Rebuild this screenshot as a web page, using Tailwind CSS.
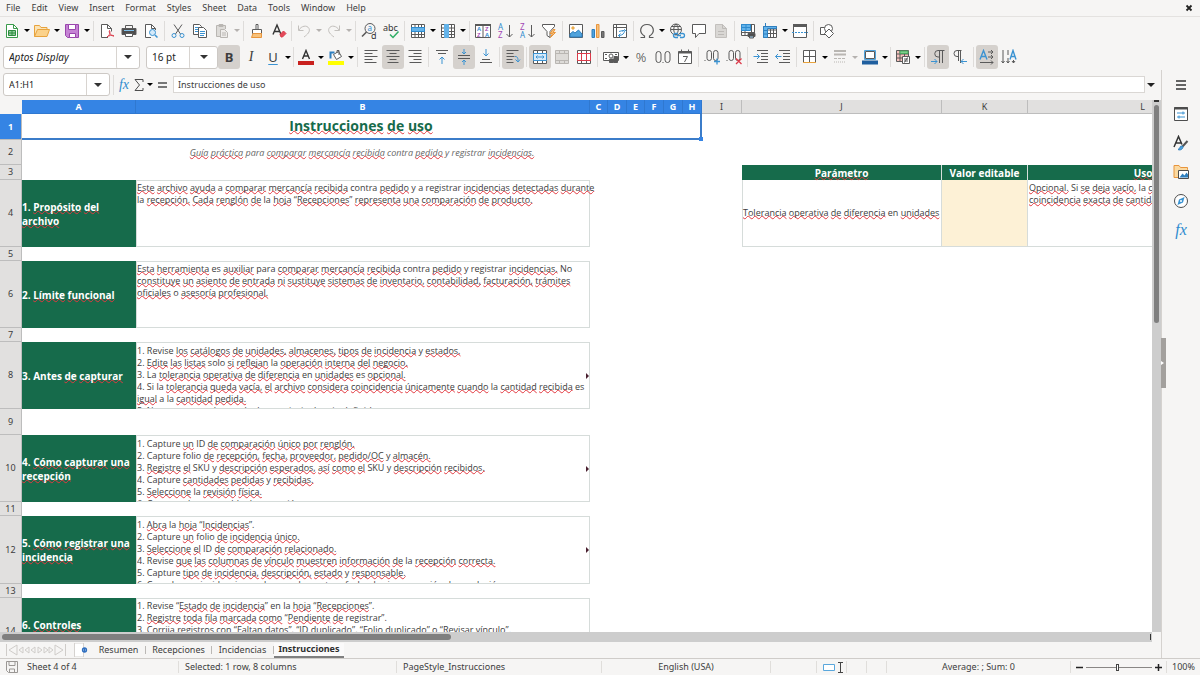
<!DOCTYPE html>
<html lang="es">
<head>
    <meta charset="UTF-8">
    <meta name="viewport" content="width=device-width, initial-scale=1.0">
    <title>Instrucciones - Calc</title>
    <script src="https://cdn.jsdelivr.net/npm/@tailwindcss/browser@4"></script>
</head>
<body class="flex h-screen flex-col overflow-hidden bg-[#f6f5f4] font-['Noto_Sans',sans-serif] text-[9px] leading-[12px] text-[#3d3d3d] [&_i]:inline-block [&_i]:border-x-[3px] [&_i]:border-t-[3px] [&_i]:border-x-transparent [&_i]:border-t-current">

    <!-- Menú principal -->
    <nav class="flex h-[17px] shrink-0 items-center border-b border-[#e4e2e0] pl-[6px] pr-[7px]">
        <div class="flex gap-[11px]">
            <button>File</button>
            <button>Edit</button>
            <button>View</button>
            <button>Insert</button>
            <button>Format</button>
            <button>Styles</button>
            <button>Sheet</button>
            <button>Data</button>
            <button>Tools</button>
            <button>Window</button>
            <button>Help</button>
        </div>
        <button class="ml-auto" aria-label="Close">
            <svg class="size-2" viewBox="0 0 8 8" fill="none" stroke="#222" stroke-width="1.8"><path d="M1.5 1.5l5 5M6.5 1.5l-5 5"/></svg>
        </button>
    </nav>

    <!-- Barra estándar -->
    <div class="flex h-[27px] shrink-0 items-center pl-px [&_button]:flex [&_button]:h-[24px] [&_button]:shrink-0 [&_button]:items-center [&_button]:justify-center [&_hr]:h-5 [&_hr]:shrink-0 [&_hr]:border-0 [&_hr]:bg-[linear-gradient(#dedcda,#dedcda)] [&_hr]:bg-[length:1px_100%] [&_hr]:bg-center [&_hr]:bg-no-repeat [&_svg]:size-4 [&_svg]:overflow-visible [&_svg]:fill-none [&_svg]:stroke-[#5a5a5a]">
        <button class="w-[22px]" aria-label="New"><svg viewBox="0 0 16 16"><path d="M2.5 1.5h7l4 4v9h-11z" fill="#fff" stroke="#3a9b4b"/><path d="M9.5 1.5v4h4" stroke="#3a9b4b"/><path d="M4.500 7.500h7v5h-7zM4.500 10h7M8 7.500v5" fill="#8fd09b" stroke="#2f8a40"/></svg></button>
        <button class="w-2 text-black" aria-label="New options"><i></i></button>
        <button class="w-[22px]" aria-label="Open"><svg viewBox="0 0 16 16"><path d="M.5 13.500v-11h5l1.500 2h6v3" fill="#fbe3b4" stroke="#e8a33d"/><path d="M.5 13.500l3-7h12l-2.500 7z" fill="#fbd28b" stroke="#e8a33d"/></svg></button>
        <button class="w-2 text-black" aria-label="Open options"><i></i></button>
        <button class="w-[22px]" aria-label="Save"><svg viewBox="0 0 16 16"><path d="M1.500 1.500h13v13h-11l-2-2z" fill="#c583d4" stroke="#9a46ad"/><path d="M4.500 1.500h7v5h-7zM5.500 10.500h6v4h-6z" fill="#fff" stroke="#9a46ad"/></svg></button>
        <button class="w-2 text-black" aria-label="Save options"><i></i></button>
        <hr class="w-[5px]">
        <button class="w-[22px]" aria-label="Export as PDF"><svg viewBox="0 0 16 16"><path d="M9 14.500H2.500v-13h6l4 4v3" fill="#fff"/><path d="M8.500 1.500v4h4"/><path d="M8 14c3-2 3.500-5 2.500-6.500-1 1.500 1 5.500 4.500 5.500-2-1.500-5-.5-7 1z" stroke="#dc3b4a"/></svg></button>
        <button class="w-[22px]" aria-label="Print"><svg viewBox="0 0 16 16"><path d="M4.500 5V2.500h7V5"/><path d="M1 5.500h14v6H1z" fill="#4d4d4d"/><path d="M3 7.500h10" stroke="#7fc0ea"/><path d="M4.500 10.500h7v3h-7z" fill="#fff"/></svg></button>
        <button class="w-[22px]" aria-label="Print preview"><svg viewBox="0 0 16 16"><path d="M8 14.500H2.500v-13h6l4 4V7" fill="#fff"/><path d="M8.500 1.500v4h4"/><circle cx="9.500" cy="9.500" r="3" fill="#d5eafa" stroke="#3b93d2"/><path d="M12 12l2.500 2.500" stroke="#3b93d2" stroke-width="1.500"/></svg></button>
        <hr class="w-[5px]">
        <button class="w-[22px]" aria-label="Cut"><svg viewBox="0 0 16 16"><path d="M4 1.500l6.500 9.500M12 1.500L5.500 11"/><circle cx="4" cy="12.500" r="2" stroke="#3b93d2"/><circle cx="12" cy="12.500" r="2" stroke="#3b93d2"/></svg></button>
        <button class="w-[22px]" aria-label="Copy"><svg viewBox="0 0 16 16"><path d="M1.500 1.500h6l2 2v8h-8z" fill="#fff"/><path d="M3 4.500h4M3 6.500h3M3 8.500h3" stroke="#3b93d2"/><path d="M6.500 4.500h5l3 3v7h-8z" fill="#fff"/><path d="M8 8.500h5M8 10.500h5M8 12.500h4" stroke="#3b93d2"/></svg></button>
        <button class="w-[22px]" aria-label="Paste"><svg viewBox="0 0 16 16"><path d="M6 13.500H2.500v-11h9V6" fill="#dddbd8" stroke="#b9b6b2"/><path d="M5 1.500h4v2H5z" fill="#b9b6b2" stroke="#b9b6b2"/><path d="M6.500 6.500h4l3 3v5h-7zM8 10h4M8 12h4" fill="#eeecea" stroke="#b9b6b2"/></svg></button>
        <button class="w-2 text-[#b5b2af]" aria-label="Paste options"><i></i></button>
        <hr class="w-[5px]">
        <button class="w-[22px]" aria-label="Clone formatting"><svg viewBox="0 0 16 16"><path d="M7 1.500h2v5H7zM3.500 6.500h9v4h-9z" fill="#fff"/><path d="M4 10.500h8.500v4h-10z" fill="#f7c27c" stroke="#e8953d"/></svg></button>
        <button class="w-[22px]" aria-label="Clear formatting"><svg viewBox="0 0 16 16"><path d="M2 11.500L6 2l4 9.500M3.500 8.500h5" stroke="#333" stroke-width="1.400"/><path d="M9 11.500l3.500-3.500 2.500 2.500-3.500 3.500H10z" fill="#e4495a" stroke="#dc3b4a"/></svg></button>
        <hr class="w-[3px]">
        <button class="w-[22px]" aria-label="Undo"><svg viewBox="0 0 16 16"><path d="M2.500 2.500v5h5M3 7c2-4 8-5.500 10-1.500 1.500 3-1.500 6-5 8.500" stroke="#c3c0bd"/></svg></button>
        <button class="w-2 text-[#b5b2af]" aria-label="Undo list"><i></i></button>
        <button class="w-[22px]" aria-label="Redo"><svg viewBox="0 0 16 16"><path d="M13.500 2.500v5h-5M13 7C11 3 5 1.500 3 5.500 1.500 8.500 4.500 11.500 8 14" stroke="#c3c0bd"/></svg></button>
        <button class="w-2 text-[#b5b2af]" aria-label="Redo list"><i></i></button>
        <hr class="w-[5px]">
        <button class="w-[22px]" aria-label="Find and replace"><svg viewBox="0 0 16 16"><circle cx="9" cy="5.500" r="5"/><path d="M5.500 9L1 13.500" stroke-width="1.600"/><text x="6.500" y="8" font-size="8" fill="#2e8bcf" stroke="none">a</text><text x="10" y="15.500" font-size="9" fill="#333" stroke="none">d</text></svg></button>
        <button class="w-[22px]" aria-label="Spelling"><svg viewBox="0 0 16 16"><text x="0" y="8" font-size="9" fill="#333" stroke="none">abc</text><path d="M7 11.500l3 3 5.500-6" stroke="#2fae66" stroke-width="1.500"/></svg></button>
        <hr class="w-[5px]">
        <button class="w-[22px]" aria-label="Row"><svg viewBox="0 0 16 16"><path d="M1.500 1.500h13v13h-13zM1.500 11.500h13M5 1.500v13M8.500 1.500v13M11.500 1.500v13" fill="#fff"/><path d="M1.500 4.500h13v4h-13z" fill="#63b3ea" stroke="#2e8bcf"/></svg></button>
        <button class="w-2 text-black" aria-label="Row options"><i></i></button>
        <button class="w-[22px]" aria-label="Column"><svg viewBox="0 0 16 16"><path d="M1.500 1.500h13v13h-13zM11.500 1.500v13M1.500 5h13M1.500 8.500h13M1.500 11.500h13" fill="#fff"/><path d="M4.500 1.500v13h4v-13z" fill="#63b3ea" stroke="#63b3ea"/></svg></button>
        <button class="w-2 text-black" aria-label="Column options"><i></i></button>
        <hr class="w-[5px]">
        <button class="w-[22px]" aria-label="Sort"><svg viewBox="0 0 16 16"><path d="M.500 1.500h15v13H.500zM8 2v12" fill="#fff"/><path d="M0 2h16" stroke-width="2"/><g stroke="none" font-size="6" font-weight="600"><text x="2" y="8" fill="#2e8bcf">A</text><text x="2" y="14" fill="#a347b5">Z</text><text x="10" y="8" fill="#a347b5">Z</text><text x="10" y="14" fill="#2e8bcf">A</text></g></svg></button>
        <button class="w-[22px]" aria-label="Sort ascending"><svg viewBox="0 0 16 16"><path d="M12.500 2v12M9.500 11l3 3 3-3"/><g stroke="none" font-size="8"><text x="1" y="7" fill="#2e8bcf">A</text><text x="1" y="15" fill="#a347b5">Z</text></g></svg></button>
        <button class="w-[22px]" aria-label="Sort descending"><svg viewBox="0 0 16 16"><path d="M12.500 2v12M9.500 11l3 3 3-3"/><g stroke="none" font-size="8"><text x="1" y="7" fill="#a347b5">Z</text><text x="1" y="15" fill="#2e8bcf">A</text></g></svg></button>
        <button class="w-[22px]" aria-label="AutoFilter"><svg viewBox="0 0 16 16"><path d="M1.500 1.500h12v2L9 8.500v6l-3-2v-4l-4.500-5z" fill="#fff"/><path d="M12 6.500l-3 4h2.500l-2 4 5-5H12l2-3z" fill="#f7c27c" stroke="#e8953d"/></svg></button>
        <hr class="w-[5px]">
        <button class="w-[22px]" aria-label="Insert image"><svg viewBox="0 0 16 16"><path d="M1.500 1.500h13v13h-13z" fill="#fff"/><circle cx="5" cy="5" r="1.200" fill="#f3c36c" stroke="#e8a33d"/><path d="M2 14l0-3 3-2.500 2 1.500 3.500-3 3.500 4v3z" fill="#4fa3dd" stroke="#2e7fbf"/></svg></button>
        <button class="w-[22px]" aria-label="Insert chart"><svg viewBox="0 0 16 16"><path d="M2 6.500h2.500v8H2z" fill="#4fa3dd" stroke="#2e7fbf"/><path d="M6.500 1.500H9v13H6.500z" fill="#f7c27c" stroke="#e8953d"/><path d="M11.500 8.500H14v6h-2.500z" fill="#777"/></svg></button>
        <button class="w-[22px]" aria-label="Pivot table"><svg viewBox="0 0 16 16"><path d="M1.500 1.500h13v13h-13zM1.500 4.500h13M4.500 1.500v13" fill="#fff"/><path d="M6.500 12.500c4 0 6-2 6-5M10.500 8.500l2-2 2 2M8.500 10.500l-2 2 2 2M7 8.500l4-1" stroke="#3b93d2"/></svg></button>
        <hr class="w-[5px]">
        <button class="w-[22px]" aria-label="Special character"><svg viewBox="0 0 16 16"><path d="M1.500 14.500h4v-1.500C-1 9 1.500 1.500 8 1.500S17 9 10.500 13v1.500h4" stroke-width="1.200"/></svg></button>
        <button class="w-2 text-black" aria-label="Special character list"><i></i></button>
        <button class="w-[22px]" aria-label="Hyperlink"><svg viewBox="0 0 16 16"><circle cx="7" cy="6.500" r="5.500"/><path d="M1.500 6.500h11M7 1c-3 3-3 8 0 11M7 1c3 3 3 8 0 11M2.500 3.500h9"/><path d="M9 10.500H6.500a2 2 0 000 4H9M11 10.500h2.500a2 2 0 010 4H11M8 12.500h4" fill="none" stroke="#3b93d2" stroke-width="1.300"/></svg></button>
        <button class="w-[22px]" aria-label="Comment"><svg viewBox="0 0 16 16"><path d="M1.500 1.500h13v9H8l-3.500 4v-4h-3z" fill="#fff"/></svg></button>
        <button class="w-[22px]" aria-label="Headers and footers"><svg viewBox="0 0 16 16"><path d="M2.500 1.500h7l4 4v9h-11z" fill="#d9d7d4" stroke="#c3c0bd"/><path d="M9.500 1.500v4h4M5 8.500h6M5 11.500h6" stroke="#bdbab7"/></svg></button>
        <hr class="w-[5px]">
        <button class="w-[22px]" aria-label="Print area"><svg viewBox="0 0 16 16"><path d="M1.500 1.500h13v11h-13zM1.500 9.500h13M11.500 1.500v11M5 8v5" fill="#fff"/><path d="M1.500 1.500h9v6h-9zM1.500 4.500h9M6 1.500v6" fill="#63b3ea" stroke="#2e8bcf"/><path d="M8 10.500h7v3H8z" fill="#4d4d4d"/><path d="M9.500 13h4v2h-4z" fill="#9fd0f2"/></svg></button>
        <button class="w-[22px]" aria-label="Freeze rows and columns"><svg viewBox="0 0 16 16"><path d="M1.500 3.500h13v11h-13zM5.500 7h9M5.500 10.500h9M8.500 4v10M11.500 4v10" fill="#fff"/><path d="M1.500 3.500h13v2h-9v9h-4z" fill="#63b3ea" stroke="#2e7fbf"/><path d="M3.500 0v3M1 7.500h4M1 11h4" stroke="#2e7fbf"/></svg></button>
        <button class="w-2 text-black" aria-label="Freeze options"><i></i></button>
        <button class="w-[22px]" aria-label="Split window"><svg viewBox="0 0 16 16"><path d="M1.500 1.500h13v13h-13z" fill="#fff"/><path d="M1 2.500h14" stroke-width="3"/><path d="M0 9.500h16" stroke="#3b93d2" stroke-dasharray="2 1"/></svg></button>
        <hr class="w-[5px]">
        <button class="w-[22px]" aria-label="Show draw functions"><svg viewBox="0 0 16 16"><path d="M6 11.500H1.500v-7H6" fill="#fff"/><circle cx="9.500" cy="5.500" r="4" fill="#fff"/><path d="M10 6l4.500 4.500L10 15l-4.500-4.500z" fill="#fff"/></svg></button>
    </div>

    <!-- Barra de formato -->
    <div class="flex h-[26px] shrink-0 items-center pl-[3px] [&_button]:flex [&_button]:h-[24px] [&_button]:shrink-0 [&_button]:items-center [&_button]:justify-center [&_button]:rounded-[3px] [&_hr]:h-5 [&_hr]:shrink-0 [&_hr]:border-0 [&_hr]:bg-[linear-gradient(#dedcda,#dedcda)] [&_hr]:bg-[length:1px_100%] [&_hr]:bg-center [&_hr]:bg-no-repeat [&_svg]:size-4 [&_svg]:fill-none [&_svg]:stroke-[#5a5a5a]">
        <div class="flex h-[23px] w-[137px] shrink-0 items-center overflow-hidden rounded-[3px] border border-[#cdc9c5] bg-white">
            <input class="h-full min-w-0 flex-1 pl-[5px] text-[10px] italic text-[#222] outline-none" aria-label="Font name" value="Aptos Display">
            <button class="w-[23px] border-l border-[#d8d4d0] text-[#333]" aria-label="Font list"><span class="border-x-4 border-t-4 border-x-transparent"></span></button>
        </div>
        <div class="ml-[6px] flex h-[23px] w-[72px] shrink-0 items-center overflow-hidden rounded-[3px] border border-[#cdc9c5] bg-white">
            <input class="h-full min-w-0 flex-1 pl-[5px] text-[10px] text-[#222] outline-none" aria-label="Font size" value="16 pt">
            <button class="w-[28px] border-l border-[#d8d4d0] text-[#333]" aria-label="Size list"><span class="border-x-4 border-t-4 border-x-transparent"></span></button>
        </div>
        <button class="w-[22px] bg-[#d5d1cd] text-[13px] font-bold" aria-label="Bold">B</button>
        <button class="w-[22px] font-['Liberation_Serif',serif] text-[14px] italic" aria-label="Italic">I</button>
        <button class="w-[22px] text-[13px] underline decoration-[#3b93d2] underline-offset-2" aria-label="Underline">U</button>
        <button class="w-2 text-black" aria-label="Underline options"><i></i></button>
        <hr class="w-[3px]">
        <button class="w-[22px]" aria-label="Font color"><svg viewBox="0 0 16 16"><path d="M4.500 10L8 1.500l3.500 8.500M5.500 7h5" stroke="#333" stroke-width="1.400"/><path d="M0 14h16" stroke="#c9211e" stroke-width="4"/></svg></button>
        <button class="w-2 text-black" aria-label="Font color options"><i></i></button>
        <button class="w-[22px]" aria-label="Background color"><svg viewBox="0 0 16 16"><path d="M5.500 5.500l5-3 3 5-5 3zM9 4V1.500h2V6" fill="#fff"/><path d="M2.500 9.500v-6h4" stroke="#2e7fbf" stroke-width="2"/><path d="M0 14h16" stroke="#ffff00" stroke-width="4"/></svg></button>
        <button class="w-2 text-black" aria-label="Background color options"><i></i></button>
        <hr class="w-[5px]">
        <button class="w-[22px]" aria-label="Align left"><svg viewBox="0 0 16 16"><path d="M1.500 1.500h13M1.500 4.500h8M1.500 7.500h13M1.500 10.500h8M1.500 13.500h12"/></svg></button>
        <button class="w-[22px] bg-[#d5d1cd]" aria-label="Center"><svg viewBox="0 0 16 16"><path d="M1.500 1.500h13M4.500 4.500h7M1.500 7.500h13M4.500 10.500h7M2.500 13.500h11"/></svg></button>
        <button class="w-[22px]" aria-label="Align right"><svg viewBox="0 0 16 16"><path d="M1.500 1.500h13M6.500 4.500h8M1.500 7.500h13M6.500 10.500h8M2.500 13.500h12"/></svg></button>
        <hr class="w-[5px]">
        <button class="w-[22px]" aria-label="Align top"><svg viewBox="0 0 16 16"><path d="M2 1.500h12M4 4.500h8"/><path d="M8 15V8M5.500 10.500L8 8l2.500 2.500" stroke="#3b93d2"/></svg></button>
        <button class="w-[22px] bg-[#d5d1cd]" aria-label="Center vertically"><svg viewBox="0 0 16 16"><path d="M2 6.500h12M2 9.500h12"/><path d="M8 0v5M6 3l2 2 2-2M8 16v-5M6 13l2-2 2 2" stroke="#3b93d2"/></svg></button>
        <button class="w-[22px]" aria-label="Align bottom"><svg viewBox="0 0 16 16"><path d="M4 10.500h8M2 13.500h12"/><path d="M8 0v7M5.500 4.500L8 7l2.500-2.500" stroke="#3b93d2"/></svg></button>
        <hr class="w-[5px]">
        <button class="w-[22px] bg-[#d5d1cd]" aria-label="Wrap text"><svg viewBox="0 0 16 16"><path d="M1.500 1.500h12M1.500 4.500h7M1.500 7.500h8M1.500 10.500h6M1.500 13.500h7"/><path d="M10 7.500c3 0 3 2 3 5M10.500 10.500l2.500 2.500 2-2.500" stroke="#3b93d2"/></svg></button>
        <hr class="w-[5px]">
        <button class="w-[22px] bg-[#d5d1cd]" aria-label="Merge and center"><svg viewBox="0 0 16 16"><path d="M1.500 1.500h13v13h-13zM5.500 1.500v3M10.500 1.500v3M5.500 11.500v3M10.500 11.500v3" fill="#fff"/><path d="M1.500 4.500h13v7h-13zM4 8h8M5.500 6.500L4 8l1.500 1.500M10.500 6.500L12 8l-1.500 1.500" fill="#d5eafa" stroke="#3b93d2"/></svg></button>
        <button class="w-[22px]" aria-label="Merge cells"><svg viewBox="0 0 16 16"><path d="M1.500 1.500h13v13h-13zM1.500 4.500h13M1.500 11.500h13M5.500 1.500v3M10.500 1.500v3M5.500 11.500v3M10.500 11.500v3" fill="#dddbd8" stroke="#b9b6b2"/></svg></button>
        <button class="w-[22px]" aria-label="Unmerge cells"><svg viewBox="0 0 16 16"><path d="M1.500 1.500h13v13h-13zM5.500 1.500v13M10.500 1.500v13" fill="#fff"/><path d="M1 4.500h14M1 11.500h14M1.500 4.500v7M5.500 4.500v7M10.500 4.500v7M14.500 4.500v7" stroke="#dc3b4a"/></svg></button>
        <hr class="w-[5px]">
        <button class="w-[22px]" aria-label="Currency"><svg viewBox="0 0 16 16"><path d="M.5 3.500h15v8H.5z" fill="#fff"/><circle cx="8" cy="7" r="2"/><path d="M2 5.500h2M12 5.500h2M2 9.500h2"/><path d="M6.500 10h4v3.500h-4zM11 7.500h3.500v6H11z" fill="#5a5a5a"/></svg></button>
        <button class="w-2 text-black" aria-label="Currency options"><i></i></button>
        <button class="w-[22px] text-[13px] font-light" aria-label="Percent">%</button>
        <button class="w-[22px]" aria-label="Number"><svg viewBox="0 0 16 16"><rect x="1" y="2.500" width="5" height="11" rx="2.500"/><rect x="10" y="2.500" width="5" height="11" rx="2.500"/><path d="M7.500 13.500h1"/></svg></button>
        <button class="w-[22px]" aria-label="Date"><svg viewBox="0 0 16 16"><path d="M1.500 2.500h13v12h-13z" fill="#fff"/><path d="M1.500 3.500h13" stroke-width="2"/><path d="M4.500 .500v3M11.500 .500v3M6 7.500h4.500L7.500 13" /></svg></button>
        <hr class="w-[5px]">
        <button class="w-[22px]" aria-label="Add decimal place"><svg viewBox="0 0 16 16"><path d="M.500 11.500h1"/><rect x="3" y="1.500" width="4.500" height="10" rx="2.200"/><rect x="9.500" y="1.500" width="4.500" height="10" rx="2.200"/><path d="M13 9.500v6M10 12.500h6" stroke="#3b93d2" stroke-width="1.300"/></svg></button>
        <button class="w-[22px]" aria-label="Delete decimal place"><svg viewBox="0 0 16 16"><path d="M.500 11.500h1"/><rect x="3" y="1.500" width="4.500" height="10" rx="2.200"/><rect x="9.500" y="1.500" width="4.500" height="10" rx="2.200"/><path d="M10 9.500l5.500 5.500M15.500 9.500L10 15" stroke="#dc3b4a" stroke-width="1.300"/></svg></button>
        <hr class="w-[5px]">
        <button class="w-[22px]" aria-label="Increase indent"><svg viewBox="0 0 16 16"><path d="M4 1.500h11M8 4.500h7M8 7.500h7M8 10.500h7M4 13.500h11"/><path d="M.500 7.500h6M4 5l2.500 2.500L4 10" stroke="#3b93d2"/></svg></button>
        <button class="w-[22px]" aria-label="Decrease indent"><svg viewBox="0 0 16 16"><path d="M4 1.500h11M8 4.500h7M8 7.500h7M8 10.500h7M4 13.500h11"/><path d="M.500 7.500h6M3 5L.500 7.500 3 10" stroke="#3b93d2"/></svg></button>
        <hr class="w-[5px]">
        <button class="w-[22px]" aria-label="Borders"><svg viewBox="0 0 16 16"><path d="M1.500 1.500h12v12h-12zM7.500 1.500v12M1.500 7.500h12" fill="#fff"/><path d="M1 13.500h13" stroke="#e8a33d"/></svg></button>
        <button class="w-2 text-black" aria-label="Border options"><i></i></button>
        <button class="w-[22px]" aria-label="Border style"><svg viewBox="0 0 16 16"><path d="M2 2h12M2 5.500h12" stroke="#b9b6b2" stroke-width="2"/><path d="M2 9.500h12" stroke="#b9b6b2" stroke-dasharray="3 1"/><path d="M2 13h12" stroke="#b9b6b2" stroke-dasharray="1 1"/></svg></button>
        <button class="w-2 text-[#b5b2af]" aria-label="Border style options"><i></i></button>
        <button class="w-[22px]" aria-label="Border color"><svg viewBox="0 0 16 16"><path d="M2.500 1.500h11v9h-11z" fill="#fff" stroke="#4fa3dd"/><path d="M3.500 2.500h9v7h-9z"/><path d="M0 13.500h16" stroke="#1f5f9f" stroke-width="4"/></svg></button>
        <button class="w-2 text-black" aria-label="Border color options"><i></i></button>
        <hr class="w-[3px]">
        <button class="w-[22px]" aria-label="Conditional formatting"><svg viewBox="0 0 16 16"><path d="M1.500 1.500h12v11h-12zM1.500 5h12M1.500 9h12M5 1.500v11M9.500 1.500v11" fill="#f6c1bd"/><path d="M5 2h8v2.500H5z" fill="#7fcf8d" stroke="#4aa85c"/><path d="M7.500 7.500h7v7h-7zM9 10h4M9 12h4M12.500 8.500l-3 5" fill="#fff"/></svg></button>
        <button class="w-2 text-black" aria-label="Conditional options"><i></i></button>
        <hr class="w-[5px]">
        <button class="w-[22px] bg-[#d5d1cd]" aria-label="Left to right"><svg viewBox="0 0 16 16"><path d="M14.500 1.500H8a3 3 0 000 6.500h1.500M9.500 14V1.500M12.500 14V1.500" fill="none"/><path d="M1 12.500h6M4.500 10L7 12.500 4.500 15" stroke="#3b93d2"/></svg></button>
        <button class="w-[22px]" aria-label="Right to left"><svg viewBox="0 0 16 16"><path d="M9.500 1.500H5a3 3 0 000 6h1.500M6.500 12V1.500M8.500 14V1.500" /><path d="M15 12.500H9M11.500 10L9 12.500l2.500 2.500" stroke="#3b93d2"/></svg></button>
        <hr class="w-[5px]">
        <button class="w-[22px] bg-[#d5d1cd]" aria-label="Text direction left to right"><svg viewBox="0 0 16 16"><path d="M1 10.500l3.500-9 3.500 9M2.500 7.500h4" stroke="#3b93d2" stroke-width="1.400"/><path d="M1 13.500h13M12 11.500l2 2-2 2M9 3h5M12 1l2 2-2 2M9 8h5M12 6l2 2-2 2"/></svg></button>
        <button class="w-[22px]" aria-label="Text direction top to bottom"><svg viewBox="0 0 16 16"><path d="M9 10.500l3-9 3 9M10 7.500h4" stroke="#3b93d2" stroke-width="1.400"/><path d="M2 1v13M.500 12L2 14l1.500-2M7 1v5M7 9v5M5.500 12L7 14l1.500-2M12.500 11v3M11 12l1.500 2 1.500-2"/></svg></button>
    </div>

    <div class="flex min-h-0 flex-1">
        <div class="flex min-w-0 flex-1 flex-col">

            <!-- Barra de fórmulas -->
            <div class="flex h-[30px] shrink-0 items-center pb-px pl-[3px] pr-[5px]">
                <div class="flex h-[23px] w-[107px] shrink-0 overflow-hidden rounded-[3px] border border-[#cdc9c5] bg-white">
                    <input class="min-w-0 flex-1 pl-[5px] text-[#222] outline-none" aria-label="Name box" value="A1:H1">
                    <button class="flex w-[23px] items-center justify-center border-l border-[#d8d4d0] text-[#333]" aria-label="Name list"><span class="border-x-4 border-t-4 border-x-transparent"></span></button>
                </div>
                <div class="ml-[3px] h-5 w-px bg-[#dedcda]"></div>
                <button class="ml-[3px] w-[14px] font-['Liberation_Serif',serif] text-[14px] italic text-[#2e8bcf]" aria-label="Function wizard">fx</button>
                <button class="ml-[3px] w-[12px]" aria-label="Select function">
                    <svg class="h-3 w-[10px]" viewBox="0 0 10 12" fill="none" stroke="#4d4d4d"><path d="M9 3V.500H1L5.500 6 1 11.500h8V9"/></svg>
                </button>
                <button class="flex w-2 justify-center text-black" aria-label="Function list"><i></i></button>
                <button class="ml-1 w-[12px]" aria-label="Formula">
                    <svg class="h-2 w-[9px]" viewBox="0 0 9 8" fill="none" stroke="#4d4d4d" stroke-width="1.500"><path d="M0 2h9M0 6h9"/></svg>
                </button>
                <input class="ml-[3px] h-[17px] min-w-0 flex-1 border border-[#dad7d4] bg-white pl-1 outline-none" aria-label="Input line" value="Instrucciones de uso">
                <button class="flex w-[11px] justify-center text-[#222]" aria-label="Expand formula bar"><span class="border-x-4 border-t-4 border-x-transparent"></span></button>
            </div>

            <!-- Hoja -->
            <div class="flex min-h-0 flex-1">
                <div class="min-w-0 flex-1 overflow-hidden bg-white">
                    <table class="w-[1258px] table-fixed border-separate border-spacing-0 whitespace-nowrap text-left [&_td]:p-0 [&_td]:font-['Open_Sans','Noto_Sans',sans-serif] [&_u]:decoration-[#e2383f] [&_u]:decoration-wavy [&_u]:decoration-1 [&_u]:underline-offset-[-1px] [&_u]:[text-decoration-skip-ink:none]">
                        <colgroup>
                            <col class="w-[22px]"><col class="w-[114px]"><col class="w-[454px]">
                            <col class="w-[18px]"><col class="w-[19px]"><col class="w-[18px]"><col class="w-[19px]"><col class="w-[19px]"><col class="w-[19px]">
                            <col class="w-[40px]"><col class="w-[200px]"><col class="w-[86px]"><col class="w-[230px]">
                        </colgroup>
                        <thead>
                            <tr class="h-[14px] text-center leading-[12px] [&_th]:border-b [&_th]:border-r [&_th]:p-0">
                                <th class="border-[#f6f5f4] bg-[#f6f5f4]"></th>
                                <th class="border-[#2f78d0] bg-[#3584e4] text-white">A</th>
                                <th class="border-[#2f78d0] bg-[#3584e4] text-white">B</th>
                                <th class="border-[#2f78d0] bg-[#3584e4] text-white">C</th>
                                <th class="border-[#2f78d0] bg-[#3584e4] text-white">D</th>
                                <th class="border-[#2f78d0] bg-[#3584e4] text-white">E</th>
                                <th class="border-[#2f78d0] bg-[#3584e4] text-white">F</th>
                                <th class="border-[#2f78d0] bg-[#3584e4] text-white">G</th>
                                <th class="border-[#2f78d0] bg-[#3584e4] text-white">H</th>
                                <th class="border-[#bdbdbd] bg-[#e1e0df] font-normal">I</th>
                                <th class="border-[#bdbdbd] bg-[#e1e0df] font-normal">J</th>
                                <th class="border-[#bdbdbd] bg-[#e1e0df] font-normal">K</th>
                                <th class="border-[#bdbdbd] bg-[#e1e0df] font-normal">L</th>
                            </tr>
                        </thead>
                        <tbody class="[&_th]:border-b [&_th]:border-r [&_th]:border-[#bdbdbd] [&_th]:p-0 [&_th]:text-center [&_th]:font-normal">
                            <tr class="h-[26px]">
                                <th class="bg-[#3584e4] text-white"><b>1</b></th>
                                <td colspan="8" class="relative border-b-2 border-r-2 border-[#3b7cc9] text-center text-[14px] font-bold leading-[22px] text-[#166b4b]">
                                    <u>Instrucciones</u> <u>de</u> <u>uso</u>
                                    <span class="absolute -bottom-[3px] -right-[3px] size-1 bg-[#3584e4]"></span>
                                </td>
                                <td colspan="4"></td>
                            </tr>
                            <tr class="h-[25px]">
                                <th class="bg-[#e1e0df]">2</th>
                                <td colspan="8" class="text-center italic text-[#666]"><u>Guía</u> <u>práctica</u> para <u>comparar</u> <u>mercancía</u> <u>recibida</u> contra <u>pedido</u> y registrar <u>incidencias.</u></td>
                                <td colspan="4"></td>
                            </tr>
                            <tr class="h-[15px]">
                                <th class="bg-[#e1e0df]">3</th>
                                <td colspan="9"></td>
                                <td class="border-r border-[#d6dedb] bg-[#166b4b] text-center text-[10px] font-bold text-white"><u>Parámetro</u></td>
                                <td class="border-r border-[#d6dedb] bg-[#166b4b] text-center text-[10px] font-bold text-white">Valor editable</td>
                                <td class="bg-[#166b4b] text-center text-[10px] font-bold text-white"><u>Uso</u></td>
                            </tr>
                            <tr>
                                <th class="bg-[#e1e0df]">4</th>
                                <td class="bg-[#166b4b] text-[10px] font-bold leading-[14px] text-white">1. <u>Propósito</u> <u>del</u><br><u>archivo</u></td>
                                <td><div class="h-[67px] border border-[#d6dcda] pt-px"><u>Este</u> <u>archivo</u> <u>ayuda</u> a <u>comparar</u> <u>mercancía</u> <u>recibida</u> contra <u>pedido</u> y a registrar <u>incidencias</u> <u>detectadas</u> <u>durante</u><br>la <u>recepción.</u> <u>Cada</u> <u>renglón</u> <u>de</u> la <u>hoja</u> “<u>Recepciones</u>” <u>representa</u> <u>una</u> <u>comparación</u> <u>de</u> <u>producto.</u></div></td>
                                <td colspan="7"></td>
                                <td class="border-b border-l border-r border-[#d6dcda]"><u>Tolerancia</u> <u>operativa</u> <u>de</u> <u>diferencia</u> en <u>unidades</u></td>
                                <td class="border-b border-r border-[#d6dcda] bg-[#fdf1d6]"></td>
                                <td class="border-b border-[#d6dcda] align-top"><div class="pl-px pt-[2px]"><u>Opcional.</u> Si <u>se</u> <u>deja</u> <u>vacío,</u> la <u>comparación</u> <u>exige</u> <u>una</u><br><u>coincidencia</u> <u>exacta</u> <u>de</u> <u>cantidades.</u></div></td>
                            </tr>
                            <tr class="h-[14px]"><th class="bg-[#e1e0df]">5</th><td colspan="12"></td></tr>
                            <tr>
                                <th class="bg-[#e1e0df]">6</th>
                                <td class="bg-[#166b4b] text-[10px] font-bold leading-[14px] text-white">2. <u>Límite</u> <u>funcional</u></td>
                                <td><div class="h-[67px] overflow-hidden border border-[#d6dcda] pt-px"><u>Esta</u> <u>herramienta</u> es <u>auxiliar</u> para <u>comparar</u> <u>mercancía</u> <u>recibida</u> contra <u>pedido</u> y registrar <u>incidencias.</u> No<br><u>constituye</u> <u>un</u> <u>asiento</u> <u>de</u> <u>entrada</u> <u>ni</u> <u>sustituye</u> <u>sistemas</u> <u>de</u> <u>inventario,</u> <u>contabilidad,</u> <u>facturación,</u> <u>trámites</u><br><u>oficiales</u> o <u>asesoría</u> <u>profesional.</u></div></td>
                                <td colspan="10"></td>
                            </tr>
                            <tr class="h-[14px]"><th class="bg-[#e1e0df]">7</th><td colspan="12"></td></tr>
                            <tr>
                                <th class="bg-[#e1e0df]">8</th>
                                <td class="bg-[#166b4b] text-[10px] font-bold leading-[14px] text-white">3. Antes <u>de</u> <u>capturar</u></td>
                                <td class="relative"><div class="h-[67px] overflow-hidden border border-[#d6dcda] pt-[2px]">1. Revise <u>los</u> <u>catálogos</u> <u>de</u> <u>unidades,</u> <u>almacenes,</u> <u>tipos</u> <u>de</u> <u>incidencia</u> y <u>estados.</u><br>2. <u>Edite</u> <u>las</u> <u>listas</u> solo <u>si</u> <u>reflejan</u> la <u>operación</u> <u>interna</u> <u>del</u> <u>negocio.</u><br>3. La <u>tolerancia</u> <u>operativa</u> <u>de</u> <u>diferencia</u> en <u>unidades</u> es <u>opcional.</u><br>4. Si la <u>tolerancia</u> <u>queda</u> <u>vacía,</u> <u>el</u> <u>archivo</u> <u>considera</u> <u>coincidencia</u> <u>únicamente</u> <u>cuando</u> la <u>cantidad</u> <u>recibida</u> es<br><u>igual</u> a la <u>cantidad</u> <u>pedida.</u><br>5. No capture productos de datos principales sin definirlos.</div>
                                    <span class="absolute right-px top-[31px] border-y-[3px] border-l-[3px] border-y-transparent border-l-[#4a2030]"></span></td>
                                <td colspan="10"></td>
                            </tr>
                            <tr class="h-[26px]"><th class="bg-[#e1e0df]">9</th><td colspan="12"></td></tr>
                            <tr>
                                <th class="bg-[#e1e0df]">10</th>
                                <td class="bg-[#166b4b] text-[10px] font-bold leading-[14px] text-white">4. <u>Cómo</u> <u>capturar</u> <u>una</u><br><u>recepción</u></td>
                                <td class="relative"><div class="h-[67px] overflow-hidden border border-[#d6dcda] pt-[2px]">1. Capture <u>un</u> ID <u>de</u> <u>comparación</u> <u>único</u> <u>por</u> <u>renglón.</u><br>2. Capture folio <u>de</u> <u>recepción,</u> <u>fecha,</u> <u>proveedor,</u> <u>pedido/OC</u> y <u>almacén.</u><br>3. <u>Registre</u> <u>el</u> SKU y <u>descripción</u> <u>esperados,</u> <u>así</u> <u>como</u> <u>el</u> SKU y <u>descripción</u> <u>recibidos.</u><br>4. Capture <u>cantidades</u> <u>pedidas</u> y <u>recibidas.</u><br>5. <u>Seleccione</u> la <u>revisión</u> <u>física.</u><br>6. Capture el responsable de recepción.</div>
                                    <span class="absolute right-px top-[31px] border-y-[3px] border-l-[3px] border-y-transparent border-l-[#4a2030]"></span></td>
                                <td colspan="10"></td>
                            </tr>
                            <tr class="h-[14px]"><th class="bg-[#e1e0df]">11</th><td colspan="12"></td></tr>
                            <tr>
                                <th class="bg-[#e1e0df]">12</th>
                                <td class="bg-[#166b4b] text-[10px] font-bold leading-[14px] text-white">5. <u>Cómo</u> <u>registrar</u> <u>una</u><br><u>incidencia</u></td>
                                <td class="relative"><div class="h-[68px] overflow-hidden border border-[#d6dcda] pt-[2px]">1. <u>Abra</u> la <u>hoja</u> “<u>Incidencias</u>”.<br>2. Capture <u>un</u> folio <u>de</u> <u>incidencia</u> <u>único.</u><br>3. <u>Seleccione</u> <u>el</u> ID <u>de</u> <u>comparación</u> <u>relacionado.</u><br>4. Revise <u>que</u> <u>las</u> <u>columnas</u> <u>de</u> <u>vínculo</u> <u>muestren</u> <u>información</u> <u>de</u> la <u>recepción</u> <u>correcta.</u><br>5. Capture <u>tipo</u> <u>de</u> <u>incidencia,</u> <u>descripción,</u> <u>estado</u> y <u>responsable.</u><br>6. Cuando una incidencia quede cerrada, capture fecha de cierre y acción de resolución.</div>
                                    <span class="absolute right-px top-[31px] border-y-[3px] border-l-[3px] border-y-transparent border-l-[#4a2030]"></span></td>
                                <td colspan="10"></td>
                            </tr>
                            <tr class="h-[14px]"><th class="bg-[#e1e0df]">13</th><td colspan="12"></td></tr>
                            <tr>
                                <th class="bg-[#e1e0df]">14</th>
                                <td class="bg-[#166b4b] text-[10px] font-bold leading-[14px] text-white">6. <u>Controles</u><br>de revisión</td>
                                <td><div class="h-[67px] overflow-hidden border border-[#d6dcda] pt-px">1. Revise “<u>Estado</u> <u>de</u> <u>incidencia</u>” en la <u>hoja</u> “<u>Recepciones</u>”.<br>2. <u>Registre</u> <u>toda</u> <u>fila</u> <u>marcada</u> <u>como</u> “<u>Pendiente</u> <u>de</u> registrar”.<br>3. Corrija registros con “Faltan datos”, “ID duplicado”, “Folio duplicado” o “Revisar vínculo”.</div></td>
                                <td colspan="10"></td>
                            </tr>
                        </tbody>
                    </table>
                </div>
                <!-- Desplazamiento vertical -->
                <div class="w-[9px] shrink-0 bg-[#cdcdcd] px-[2px]">
                    <div class="h-[2px] bg-[#333]"></div>
                    <div class="mt-[3px] h-[218px] rounded-full bg-[#7f7f7f]"></div>
                </div>
            </div>

            <!-- Desplazamiento horizontal -->
            <div class="mr-[9px] flex h-[10px] shrink-0 items-center justify-between bg-[#cdcdcd] pl-[2px]">
                <div class="h-[6px] w-[39%] rounded-full bg-[#7f7f7f]"></div>
                <div class="mr-px h-[6px] w-px bg-[#333]"></div>
            </div>

            <!-- Pestañas de hojas -->
            <div class="flex h-[16px] shrink-0 items-center pl-[6px]">
                <button class="w-[62px]" aria-label="Sheet navigation">
                    <svg class="h-3 w-[60px]" viewBox="0 0 60 12" fill="none" stroke="#cfccc9"><path d="M.500 0v12M11 1L3 6l8 5zM17 3l-4 3 4 3zM23 3l-4 3 4 3zM29 3l-4 3 4 3zM32 3l4 3-4 3zM38 3l4 3-4 3zM43 3l4 3-4 3zM49 1l8 5-8 5zM59.500 0v12"/></svg>
                </button>
                <button class="ml-[6px] w-[14px]" aria-label="Add sheet">
                    <svg class="size-[14px]" viewBox="0 0 14 14"><path d="M.500 0h9v14h-9z" fill="#fff" stroke="#d5d2cf"/><circle cx="10.500" cy="7" r="2" fill="#fff" stroke="#2f6fc0" stroke-width="1.300"/><path d="M10.500 5v4M8.500 7h4" stroke="#2f6fc0"/></svg>
                </button>
                <button class="ml-[4px] w-[53px]">Resumen</button>
                <div class="h-2 w-px bg-[#bbb8b5]"></div>
                <button class="w-[65px]">Recepciones</button>
                <div class="h-2 w-px bg-[#bbb8b5]"></div>
                <button class="w-[61px]">Incidencias</button>
                <div class="h-2 w-px bg-[#bbb8b5]"></div>
                <button class="h-[15px] w-[70px] border-b-2 border-[#7f7f7f] bg-[#fbfafa] font-bold text-[#2e2e2e]">Instrucciones</button>
            </div>
        </div>

        <!-- Barra lateral -->
        <aside class="relative flex w-[39px] shrink-0 flex-col items-center gap-[13px] border-l border-[#d5d2cf] pt-[7px] [&_svg]:size-4">
            <button aria-label="Sidebar settings"><svg viewBox="0 0 16 16" fill="none" stroke="#333" stroke-width="1.500"><path d="M3 4h10M3 8h10M3 12h10"/></svg></button>
            <button aria-label="Properties"><svg viewBox="0 0 16 16" fill="none" stroke="#4d4d4d"><path d="M1.500 1.500h13v13h-13z" fill="#fff"/><path d="M1 2.500h14" stroke-width="2"/><path d="M4 7h8M10 5.500v3M4 11h8M6 9.500v3" stroke="#3b93d2"/></svg></button>
            <button aria-label="Styles"><svg viewBox="0 0 16 16" fill="none" stroke="#333"><path d="M1 12L5.500 1.500 9 9.500M3 8h5" stroke-width="1.500"/><path d="M14.500 6l-5 5.500" stroke="#555" stroke-width="2"/><path d="M5 14.500c2 1 5 0 5-3l-2-.500c-1 0-1 3-3 3.500z" fill="#4fa3dd" stroke="#2e7fbf"/></svg></button>
            <button aria-label="Gallery"><svg viewBox="0 0 16 16" fill="none"><path d="M1 13.500v-12h5l1.500 2h7v2L13 13.500z" fill="#fbd9a0" stroke="#e8953d"/><path d="M5.500 6.500h10v8h-10z" fill="#fff" stroke="#4d4d4d"/><path d="M6.500 13.500l3-4 2 2 2-3 1.500 2v3z" fill="#2e7fbf"/></svg></button>
            <button aria-label="Navigator"><svg viewBox="0 0 16 16" fill="none"><circle cx="8" cy="8" r="6.500" fill="#fff" stroke="#4d4d4d"/><path d="M11.500 4l-1.500 5.500L4.500 12 6 6.500z" fill="#3b93d2"/><circle cx="8" cy="8" r="1" fill="#fff"/></svg></button>
            <button class="h-4 font-['Liberation_Serif',serif] text-[16px] italic text-[#2e8bcf]" aria-label="Functions">fx</button>
            <button class="absolute -left-px top-[268px] h-[50px] w-[5px] bg-[#a3a09d]" aria-label="Hide sidebar">
                <span class="block border-y-2 border-l-[3px] border-y-transparent border-l-white"></span>
            </button>
        </aside>
    </div>

    <!-- Barra de estado -->
    <footer class="grid h-[17px] shrink-0 grid-cols-[179fr_218fr_205fr_169fr_46fr_30fr_20fr_20fr_184fr_96fr_33fr] items-center border-t border-[#cfccc9] [&>div]:flex [&>div]:h-3 [&>div]:items-center [&>div]:border-r [&>div]:border-[#e0dedb]">
        <div class="gap-[9px] pl-[6px]">
            <svg class="size-3" viewBox="0 0 12 12" fill="none" stroke="#9a9794"><path d="M.500 .500h11v11h-9l-2-2zM3 .500h6v4H3zM3.500 8h5v3.500h-5z"/></svg>
            Sheet 4 of 4
        </div>
        <div class="pl-[6px]">Selected: 1 row, 8 columns</div>
        <div class="pl-[6px]">PageStyle_Instrucciones</div>
        <div class="justify-center">English (USA)</div>
        <div></div>
        <div class="gap-[3px] pl-[6px]">
            <svg class="h-[7px] w-3 shrink-0" viewBox="0 0 12 7" fill="#fff" stroke="#5aa7dc"><path d="M.500 .500h11v6H.500z"/></svg>
            <svg class="h-[11px] w-[5px] shrink-0" viewBox="0 0 5 11" fill="none" stroke="#444"><path d="M0 .500h5M0 10.500h5M2.500 .500v10"/></svg>
        </div>
        <div></div>
        <div></div>
        <div class="justify-center">Average: ; Sum: 0</div>
        <div class="justify-center gap-[3px]">
            <button aria-label="Zoom out"><svg class="size-[7px]" viewBox="0 0 7 7" stroke="#222" stroke-width="1.500"><path d="M0 3.500h7"/></svg></button>
            <input type="range" aria-label="Zoom" min="0" max="200" value="98" class="h-px w-[66px] appearance-none bg-[#8a8785] [&::-webkit-slider-thumb]:h-[7px] [&::-webkit-slider-thumb]:w-[3px] [&::-webkit-slider-thumb]:appearance-none [&::-webkit-slider-thumb]:border [&::-webkit-slider-thumb]:border-[#444] [&::-webkit-slider-thumb]:bg-white">
            <button aria-label="Zoom in"><svg class="size-[7px]" viewBox="0 0 7 7" stroke="#222" stroke-width="1.500"><path d="M0 3.500h7M3.500 0v7"/></svg></button>
        </div>
        <button class="text-center">100%</button>
    </footer>

</body>
</html>
